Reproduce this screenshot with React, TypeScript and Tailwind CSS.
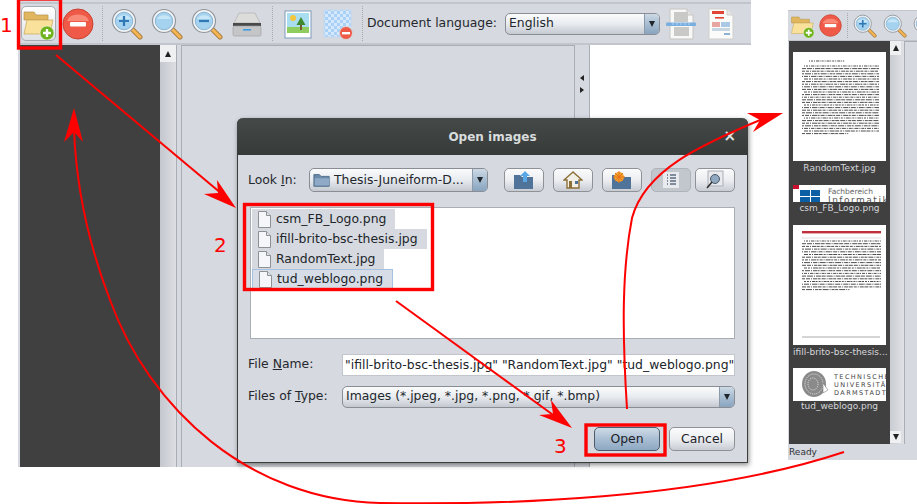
import React from 'react';

const FONT = "font-['DejaVu_Sans',sans-serif]";

function FolderAddIcon({ size = 32 }: { size?: number }) {
  return (
    <svg width={size} height={size} viewBox="0 0 32 32">
      <path d="M2 4h10l2 3h12v5H2z" fill="#e0b75e" stroke="#b8934a" strokeWidth="0.7" />
      <path d="M2 26L5 12h26l-3 14z" fill="#f9e19c" stroke="#c9a45a" strokeWidth="0.7" />
      <circle cx="25" cy="25" r="7" fill="#6eb31c" stroke="#fff" strokeWidth="0.5" />
      <path d="M25 21v8M21 25h8" stroke="#fff" strokeWidth="2.4" />
    </svg>
  );
}

function RemoveIcon({ size = 32 }: { size?: number }) {
  return (
    <svg width={size} height={size} viewBox="0 0 32 32">
      <circle cx="16" cy="16" r="15" fill="#ef5a48" stroke="#c9412f" />
      <path d="M5 13a11.5 9 0 0 1 22 0z" fill="#f98a78" />
      <rect x="8" y="14" width="16" height="4.4" rx="1" fill="#fff" />
    </svg>
  );
}

function MagnifierIcon({ kind, size = 32 }: { kind: 'in' | 'fit' | 'out'; size?: number }) {
  return (
    <svg width={size} height={size} viewBox="0 0 32 32">
      <path d="M20 20l9 9" stroke="#a88045" strokeWidth="5" strokeLinecap="round" />
      <path d="M21 21l8 8" stroke="#f6b452" strokeWidth="3" strokeLinecap="round" />
      <circle cx="13" cy="13" r="11.5" fill="#f2f4f6" stroke="#8f969e" strokeWidth="1.2" />
      <circle cx="13" cy="13" r="8.8" fill="#a5d3ef" stroke="#7fa9c6" strokeWidth="0.8" />
      <path d="M6 11a7.5 6 0 0 1 14 0z" fill="#c9e6f7" />
      {kind === 'in' && <path d="M13 8v10M8 13h10" stroke="#2f78b4" strokeWidth="2.2" />}
      {kind === 'out' && <path d="M8 13h10" stroke="#2f78b4" strokeWidth="2.2" />}
    </svg>
  );
}

function ScannerIcon({ size = 32 }: { size?: number }) {
  return (
    <svg width={size} height={size} viewBox="0 0 32 32">
      <path d="M8 5h16l5 10H3z" fill="#dcdcda" stroke="#a8a8a6" strokeWidth="0.6" />
      <rect x="2" y="15" width="28" height="3" fill="#4a4a4a" />
      <rect x="2" y="18" width="28" height="10" rx="1.5" fill="#c3c5c7" stroke="#9a9c9e" strokeWidth="0.6" />
      <rect x="12" y="21" width="8" height="1.6" fill="#3d9be0" />
    </svg>
  );
}

function PictureIcon({ size = 32 }: { size?: number }) {
  return (
    <svg width={size} height={size} viewBox="0 0 32 32">
      <rect x="3" y="3" width="26" height="27" fill="#fff" stroke="#7c9cbc" strokeWidth="1" />
      <rect x="5" y="5" width="22" height="17" fill="#a8def0" />
      <rect x="5" y="19" width="22" height="6" fill="#8fce5e" />
      <circle cx="11" cy="10" r="3" fill="#f4c63d" />
      <path d="M19 9l4.5 8h-9z" fill="#3f8a2e" />
      <rect x="18" y="17" width="2" height="5" fill="#7b5a2e" />
    </svg>
  );
}

function TransparentIcon({ size = 32 }: { size?: number }) {
  return (
    <svg width={size} height={size} viewBox="0 0 32 32">
      <defs>
        <pattern id="check" width="6" height="6" patternUnits="userSpaceOnUse">
          <rect width="6" height="6" fill="#d6e8fb" />
          <rect width="3" height="3" fill="#a9d0f7" />
          <rect x="3" y="3" width="3" height="3" fill="#a9d0f7" />
        </pattern>
      </defs>
      <rect x="2" y="2" width="27" height="27" fill="url(#check)" stroke="#c2d8ee" />
      <circle cx="24" cy="25" r="6.5" fill="#ef5a48" stroke="#d8d8d8" />
      <rect x="20" y="24" width="8" height="2.4" fill="#fff" />
    </svg>
  );
}

function DeskewIcon() {
  return (
    <svg width="32" height="32" viewBox="0 0 32 32">
      <path d="M5 1h17l6 6v24H5z" fill="#f8f8f6" stroke="#c4c4c2" />
      <path d="M22 1v6h6" fill="#e2e2e0" stroke="#c4c4c2" />
      <rect x="9" y="4" width="14" height="10" fill="#c9c9c7" />
      <rect x="9" y="19" width="15" height="9" fill="#c9c9c7" />
      <rect x="1" y="14.5" width="30" height="3.4" rx="1" fill="#79aee0" />
      <path d="M7 16h18" stroke="#b9d4ee" strokeWidth="1" strokeDasharray="2 2" />
    </svg>
  );
}

function LayoutIcon() {
  return (
    <svg width="32" height="32" viewBox="0 0 32 32">
      <path d="M4 1h18l6 6v24H4z" fill="#fbfbfa" stroke="#cfcfcd" />
      <path d="M22 1v6h6" fill="#e6e6e4" stroke="#cfcfcd" />
      <rect x="7" y="3" width="12" height="3" fill="#e04535" />
      <rect x="10" y="9" width="9" height="1.6" fill="#e04535" />
      <rect x="7" y="14" width="8" height="5" fill="#e8a6a0" />
      <rect x="16" y="14" width="9" height="5" fill="#a9c9e6" />
      <rect x="7" y="20" width="18" height="3" fill="#c8d6e4" />
      <rect x="19" y="25" width="6" height="2" fill="#8fb2d4" />
    </svg>
  );
}

function ToolbarSeparator({ w }: { w: string }) {
  return (
    <div className={`${w} h-full flex justify-center py-[2px]`}>
      <div className="h-full border-l border-dotted border-[#a6a9ae]" />
    </div>
  );
}

function ComboArrow({ h }: { h: string }) {
  return (
    <span className={`${h} w-[15px] shrink-0 flex items-center justify-center bg-gradient-to-b from-[#cdd9e5] via-[#a7bdd2] to-[#8aa4bf] border-l border-[#8c99a8]`}>
      <span className="w-0 h-0 border-x-[3.5px] border-x-transparent border-t-[6px] border-t-[#20262c]" />
    </span>
  );
}

function Combo({ text, className, icon }: { text: string; className: string; icon?: React.ReactNode }) {
  return (
    <div className={`${className} flex items-center rounded-[5px] border border-[#8a8e94] overflow-hidden bg-gradient-to-b from-[#fafbfc] via-[#e8ebef] to-[#c4c9d1] text-[12.4px] text-[#22272c]`}>
      {icon}
      <span className="flex-1 pl-[3px] whitespace-nowrap overflow-hidden">{text}</span>
      <ComboArrow h="h-full" />
    </div>
  );
}

function FolderGlyph() {
  return (
    <svg width="18" height="18" viewBox="0 0 20 18" className="ml-[3px] shrink-0">
      <path d="M1 3h6l2 2h9v11H1z" fill="#6b8bab" stroke="#4c6a88" />
      <path d="M2 7h16v8H2z" fill="#8eaac6" />
    </svg>
  );
}

function DialogToolButton({ children, active, className = '' }: { children: React.ReactNode; active?: boolean; className?: string }) {
  return (
    <div className={`w-[40px] h-[24px] rounded-[5px] flex items-center justify-center border ${className} ${active ? 'border-[#aeb3ba] bg-[#c2c6cd]' : 'border-[#8e9297] bg-gradient-to-b from-[#fbfbfc] via-[#eceef1] to-[#c8ccd3]'}`}>
      {children}
    </div>
  );
}

function FileRow({ name, focused }: { name: string; focused?: boolean }) {
  return (
    <div className={`w-fit h-[20px] flex items-center pl-[5px] pr-[9px] gap-[4px] text-[12.4px] text-[#20252a] ${focused ? 'bg-[#d6dde6] border border-[#a5c3e0]' : 'bg-[#d6d9df]'}`}>
      <svg width="15" height="17" viewBox="0 0 15 17" className="shrink-0">
        <path d="M1.5 .5h8l4 4v12h-12z" fill="#f4f6f9" stroke="#8d9094" />
        <path d="M9.5 .5v4h4" fill="#dfe2e6" stroke="#8d9094" />
      </svg>
      {name}
    </div>
  );
}

// fake text lines of a scanned page, drawn as dashes
function PageLines({ x, y, w, rows, step }: { x: number; y: number; w: number; rows: number; step: number }) {
  return (
    <g>
      {Array.from({ length: rows }, (_, i) => (
        <line
          key={i}
          x1={x + (i % 5 === 0 ? 2 : 0)}
          x2={x + (i === rows - 1 ? w * 0.6 : w)}
          y1={y + i * step}
          y2={y + i * step}
          stroke="#222"
          strokeWidth="0.8"
          strokeDasharray={`${1 + (i * 7) % 4} 1 ${2 + (i * 3) % 5} 1 1 1 ${3 + (i * 5) % 3} 0.6`}
        />
      ))}
    </g>
  );
}

function RightCrop() {
  return (
    <div className="absolute left-[788px] top-[10px] w-[129px] h-[450px] bg-[#d6d9df] flex flex-col overflow-hidden">
      <div className="h-[31px] flex items-center border-y border-[#c2c5cb] shrink-0">
        <div className="w-[28px] flex justify-center"><FolderAddIcon size={24} /></div>
        <div className="w-[29px] flex justify-center"><RemoveIcon size={23} /></div>
        <ToolbarSeparator w="w-[5px]" />
        <div className="w-[30px] flex justify-center"><MagnifierIcon kind="in" size={24} /></div>
        <div className="w-[30px] flex justify-center"><MagnifierIcon kind="fit" size={24} /></div>
        <div className="w-[7px] overflow-hidden pl-[3px]"><div className="w-[24px]"><MagnifierIcon kind="out" size={24} /></div></div>
      </div>
      <div className="flex h-[403px] shrink-0">
        <div className="w-[101px] ml-[1px] bg-[#404040] flex flex-col items-center pt-[11px] text-[9px] text-[#d4d6d9] overflow-hidden shrink-0">
          <div className="w-[93px] h-[109px] bg-white">
            <svg width="93" height="109" viewBox="0 0 93 109">
              <PageLines x={14} y={9} w={62} rows={1} step={3} />
              <PageLines x={9} y={14} w={77} rows={27} step={2.6} />
            </svg>
          </div>
          <div className="h-[16px] leading-[15px]">RandomText.jpg</div>
          <div className="w-[93px] h-[17px] mt-[8px] bg-white relative overflow-hidden shrink-0">
            <div className="absolute left-0 top-0 w-[6px] h-[4px] bg-[#c8102e]" />
            <div className="absolute left-[7px] top-[5px] w-[20px] h-[12px] grid grid-cols-2 gap-[1px]">
              <div className="bg-[#0b5fa5]" /><div className="bg-[#0b5fa5]" /><div className="bg-[#0b5fa5]" /><div className="bg-[#0b5fa5]" />
            </div>
            <div className="absolute left-[35px] top-[3px] text-[7.5px] leading-[7px] text-[#666] whitespace-nowrap">Fachbereich</div>
            <div className="absolute left-[35px] top-[11px] text-[9px] leading-[9px] tracking-[1.5px] text-[#555] whitespace-nowrap">Informatik</div>
          </div>
          <div className="h-[14px] leading-[12px] mb-[9px] shrink-0">csm_FB_Logo.png</div>
          <div className="w-[93px] h-[120px] bg-white shrink-0">
            <svg width="93" height="120" viewBox="0 0 93 120">
              <rect x="9" y="6" width="79" height="2.4" fill="#c0303c" />
              <line x1="9" x2="88" y1="13" y2="13" stroke="#bbb" strokeWidth="0.5" />
              <PageLines x={9} y={16} w={79} rows={19} step={2.7} />
              <line x1="9" x2="87" y1="112" y2="112" stroke="#888" strokeWidth="0.7" />
            </svg>
          </div>
          <div className="h-[14px] leading-[14px] w-[93px] text-center whitespace-nowrap shrink-0">ifill-brito-bsc-thesis...</div>
          <div className="w-[93px] h-[33px] mt-[9px] bg-white flex items-center overflow-hidden shrink-0">
            <svg width="30" height="30" viewBox="0 0 30 30" className="ml-[8px] shrink-0">
              <ellipse cx="13" cy="14" rx="12" ry="13" fill="#8a8a8a" />
              <ellipse cx="13" cy="14" rx="9" ry="10" fill="none" stroke="#e4e4e4" strokeDasharray="1 1" />
              <ellipse cx="12" cy="14" rx="5" ry="6" fill="none" stroke="#e4e4e4" strokeDasharray="1 1" />
              <path d="M22 13l5 7-5 3z" fill="#fff" stroke="#666" strokeWidth="0.5" />
            </svg>
            <div className="ml-[3px] text-[6.5px] leading-[8px] tracking-[1.4px] text-[#444] whitespace-nowrap">
              <div>TECHNISCHE</div><div>UNIVERSITÄT</div><div>DARMSTADT</div>
            </div>
          </div>
          <div className="h-[11px] leading-[11px] shrink-0">tud_weblogo.png</div>
        </div>
        <div className="w-[14px] flex flex-col justify-between bg-gradient-to-r from-[#c9ccd2] to-[#dfe1e5] shrink-0">
          <div className="h-[14px] w-[11px] bg-[#eff0f2] flex items-center justify-center">
            <span className="w-0 h-0 border-x-[3.5px] border-x-transparent border-b-[6px] border-b-[#222]" />
          </div>
          <div className="h-[12px] w-[11px] mb-[1px] bg-[#eff0f2] flex items-center justify-center">
            <span className="w-0 h-0 border-x-[3.5px] border-x-transparent border-t-[6px] border-t-[#222]" />
          </div>
        </div>
        <div className="flex-1 border-l border-t border-[#a9adb4]" />
      </div>
      <div className="text-[9px] leading-[16px] pl-[1px] text-[#2c3034]">Ready</div>
    </div>
  );
}

function Annotations() {
  return (
    <svg className="absolute left-0 top-0 pointer-events-none" width="917" height="504" viewBox="0 0 917 504" fill="none">
      <rect x="18.5" y="-1" width="42" height="49" stroke="#ff0000" strokeWidth="3.4" />
      <rect x="244.5" y="204.5" width="188" height="85" stroke="#ff0000" strokeWidth="3.4" />
      <rect x="586" y="425" width="79" height="30" stroke="#ff0000" strokeWidth="3.4" />
      <path d="M56 55L222 194" stroke="#ff0000" strokeWidth="2" />
      <path d="M236 208L204 194L218 193L217 180z" fill="#ff0000" />
      <path d="M396 301L556 417" stroke="#ff0000" strokeWidth="2" />
      <path d="M572 428L539 415L553 414L551 400z" fill="#ff0000" />
      <path d="M627 409C622 330 622 270 632 218C645 170 700 145 765 118" stroke="#ff0000" strokeWidth="2" />
      <path d="M783 113L747 113L760 120L753 132z" fill="#ff0000" />
      <path d="M844 452C700 500 500 505 380 503C250 500 150 410 110 300C85 235 76 180 74 130" stroke="#ff0000" strokeWidth="2" />
      <path d="M74 108L64 142L74 132L83 142z" fill="#ff0000" />
    </svg>
  );
}

export default function App() {
  return (
    <div className={`relative w-[917px] h-[504px] bg-white overflow-hidden ${FONT}`}>
      {/* Main window */}
      <div className="absolute left-[18px] top-0 w-[733px] h-[467px] bg-[#d6d9df] flex flex-col">
        <div className="h-[43px] mt-[2px] flex items-center border-y-2 border-[#c2c5cb] shrink-0">
          <div className="w-[40px] flex justify-center">
            <div className="w-[35px] h-[35px] rounded-[5px] border border-[#a8abb0] bg-gradient-to-b from-[#ffffff] to-[#dfe2e6] flex items-center justify-center">
              <FolderAddIcon />
            </div>
          </div>
          <div className="w-[40px] flex justify-center"><RemoveIcon /></div>
          <ToolbarSeparator w="w-[9px]" />
          <div className="w-[40px] flex justify-center"><MagnifierIcon kind="in" /></div>
          <div className="w-[40px] flex justify-center"><MagnifierIcon kind="fit" /></div>
          <div className="w-[40px] flex justify-center"><MagnifierIcon kind="out" /></div>
          <div className="w-[40px] flex justify-center"><ScannerIcon /></div>
          <ToolbarSeparator w="w-[11px]" />
          <div className="w-[40px] flex justify-center"><PictureIcon /></div>
          <div className="w-[40px] flex justify-center"><TransparentIcon /></div>
          <ToolbarSeparator w="w-[9px]" />
          <span className="w-[138px] text-[12.4px] text-[#24282d] whitespace-nowrap">Document language:</span>
          <Combo text="English" className="w-[155px] h-[22px]" />
          <div className="w-[40px] ml-[1px] flex justify-center"><DeskewIcon /></div>
          <div className="w-[40px] flex justify-center"><LayoutIcon /></div>
        </div>
        <div className="flex-1 flex min-h-0">
          <div className="w-[140px] ml-[2px] bg-[#404040] shrink-0" />
          <div className="w-[16px] bg-gradient-to-r from-[#c4c7cd] to-[#dcdee3] shrink-0">
            <div className="h-[17px] bg-[#eff0f2] flex items-center justify-center">
              <span className="w-0 h-0 border-x-[3.5px] border-x-transparent border-b-[6px] border-b-[#222]" />
            </div>
          </div>
          <div className="w-[5px] border-l border-[#a9adb4] shrink-0" />
          <div className="w-[394px] border-l border-t border-r border-[#a9adb4] shrink-0" />
          <div className="w-[14px] flex flex-col items-center pt-[30px] gap-[6px] shrink-0">
            <span className="w-0 h-0 border-y-[3.5px] border-y-transparent border-r-[4px] border-r-[#222]" />
            <span className="w-0 h-0 border-y-[3.5px] border-y-transparent border-l-[4px] border-l-[#222]" />
          </div>
          <div className="flex-1 bg-white border-l border-[#a9adb4]" />
        </div>
      </div>

      {/* Open images dialog */}
      <div className="absolute left-[237px] top-[118px] w-[511px] h-[345px] rounded-t-[6px] bg-[#d6d9df] flex flex-col shadow-[1px_2px_5px_rgba(0,0,0,0.45)] border-x border-b border-[#3a3e3d]">
        <div className="h-[37px] rounded-t-[6px] bg-gradient-to-b from-[#454a49] to-[#363a39] flex items-center justify-center relative shrink-0 -mx-[1px]">
          <span className="text-[12px] font-bold text-[#d9dcdc]">Open images</span>
          <span className="absolute right-[12px] top-[10px] text-[15px] leading-[17px] font-bold text-[#e4e6e6]">×</span>
        </div>
        <div className="flex-1 flex flex-col px-[10px] pt-[13px]">
          <div className="flex items-center h-[24px]">
            <span className="w-[61px] text-[12.4px] text-[#24282d]">Look <span className="underline">I</span>n:</span>
            <Combo text="Thesis-Juneiform-D..." className="w-[179px] h-[24px]" icon={<FolderGlyph />} />
            <div className="ml-[16px] flex gap-[9px]">
              <DialogToolButton>
                <svg width="22" height="20" viewBox="0 0 22 20"><path d="M1 5h6l2 2h11v12H1z" fill="#4f7399" /><path d="M12 1l5 5h-3v6h-4V6H7z" fill="#5aa7e6" /></svg>
              </DialogToolButton>
              <DialogToolButton>
                <svg width="20" height="18" viewBox="0 0 20 18"><path d="M10 1L1 9h3v8h12V9h3z" fill="#f2f0e6" stroke="#8c6f36" strokeWidth="1.4" /><rect x="6" y="10" width="3" height="7" fill="#8c6f36" /><rect x="12" y="10" width="3" height="3" fill="#4f7399" /></svg>
              </DialogToolButton>
              <DialogToolButton>
                <svg width="22" height="20" viewBox="0 0 22 20"><path d="M1 5h6l2 2h11v12H1z" fill="#4f7399" /><circle cx="8" cy="7" r="5" fill="#f0a12e" /><path d="M8 1v12M2 7h12M4 3l8 8M12 3l-8 8" stroke="#e8701a" strokeWidth="1" /></svg>
              </DialogToolButton>
              <DialogToolButton active>
                <svg width="16" height="16" viewBox="0 0 16 16"><rect width="16" height="16" fill="#e8eaee" /><path d="M4 3h1M4 6h1M4 9h1M4 12h1M7 3h6M7 6h6M7 9h6M7 12h6" stroke="#5d6d80" strokeWidth="1.6" /></svg>
              </DialogToolButton>
              <DialogToolButton className="-ml-[5px]">
                <svg width="20" height="20" viewBox="0 0 20 20"><rect x="3" y="1" width="15" height="15" fill="#e8eaee" stroke="#aab0b8" /><circle cx="10" cy="9" r="4.5" fill="#8fa8c0" stroke="#4c5a68" /><path d="M7 12l-5 6" stroke="#333" strokeWidth="1.6" /></svg>
              </DialogToolButton>
            </div>
          </div>
          <div className="mt-[15px] ml-[2px] w-[485px] h-[132px] bg-white border border-[#a9adb4] pl-[1px] pt-[1px] shrink-0">
            <FileRow name="csm_FB_Logo.png" />
            <FileRow name="ifill-brito-bsc-thesis.jpg" />
            <FileRow name="RandomText.jpg" />
            <FileRow name="tud_weblogo.png" focused />
          </div>
          <div className="flex items-center mt-[14px] h-[23px]">
            <span className="w-[94px] text-[12.4px] text-[#24282d]">File <span className="underline">N</span>ame:</span>
            <div className="flex-1 h-[22px] mr-[2px] bg-white border border-[#c2c5cb] pl-[2px] text-[12.4px] leading-[20px] text-[#20252a] whitespace-nowrap overflow-hidden">"ifill-brito-bsc-thesis.jpg" "RandomText.jpg" "tud_weblogo.png"</div>
          </div>
          <div className="flex items-center mt-[9px] h-[23px]">
            <span className="w-[94px] text-[12.4px] text-[#24282d]">Files of <span className="underline">T</span>ype:</span>
            <Combo text="Images (*.jpeg, *.jpg, *.png, *.gif, *.bmp)" className="flex-1 h-[22px] mr-[2px]" />
          </div>
          <div className="flex justify-end gap-[9px] mt-[19px] mr-[2px]">
            <button className="w-[66px] h-[24px] rounded-[5px] border border-[#4d5c6c] bg-gradient-to-b from-[#cfdbe7] via-[#a9bed3] to-[#8ea8c2] text-[12.4px] text-[#1d2228]">Open</button>
            <button className="w-[66px] h-[24px] rounded-[5px] border border-[#8e9297] bg-gradient-to-b from-[#fbfbfc] via-[#eceef1] to-[#c8ccd3] text-[12.4px] text-[#1d2228]">Cancel</button>
          </div>
        </div>
      </div>

      <RightCrop />
      <Annotations />

      <span className="absolute left-0 top-[13px] text-[20px] leading-[24px] text-[#ff0000]">1</span>
      <span className="absolute left-[214px] top-[233px] text-[20px] leading-[24px] text-[#ff0000]">2</span>
      <span className="absolute left-[554px] top-[434px] text-[20px] leading-[24px] text-[#ff0000]">3</span>
    </div>
  );
}
